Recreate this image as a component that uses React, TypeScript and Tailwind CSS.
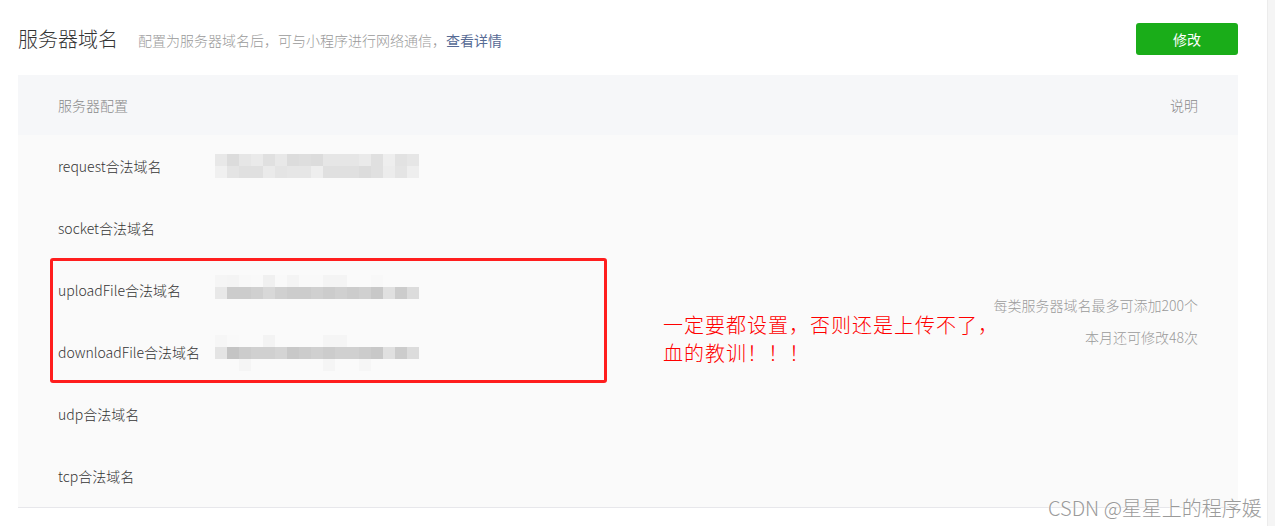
import React from "react";

const FONT = { fontFamily: '"Noto Sans CJK SC", "Noto Sans", sans-serif' };

type Row = string[];

const requestMosaic: Row[] = [
  ["#e8e8e8", "#dcdcdc", "#e6e6e6", "#eaeaea", "#e0e0e0", "#e8e8e8", "#dcdcdc", "#dedede", "#dcdcdc", "#e6e6e6", "#e6e6e6", "#e6e6e6", "#eaeaea", "#e0e0e0", "#eeeeee", "#e2e2e2", "#e6e6e6"],
  ["#f0f0f0", "#e4e4e4", "#e0e0e0", "#e0e0e0", "#eaeaea", "#e4e4e4", "#e6e6e6", "#e6e6e6", "#eeeeee", "#e0e0e0", "#e0e0e0", "#e0e0e0", "#dcdcdc", "#e0e0e0", "#ececec", "#e4e4e4", "#eeeeee"],
];

const uploadMosaic: Row[] = [
  ["#f5f5f5", "#f4f4f4", "#f8f8f8", "#f9f9f9", "#f0f0f0", "#f9f9f9", "#f4f4f4", "#f9f9f9", "#f9f9f9", "#f4f4f4", "#f4f4f4", "#fafafa", "#fafafa", "#f8f8f8", "#fafafa", "#fafafa", "#fafafa"],
  ["#e8e8e8", "#cccccc", "#cccccc", "#d0d0d0", "#d8d8d8", "#d0d0d0", "#cccccc", "#cccccc", "#d0d0d0", "#cccccc", "#d0d0d0", "#cccccc", "#d0d0d0", "#c8c8c8", "#e0e0e0", "#cccccc", "#dcdcdc"],
];

const downloadMosaic: Row[] = [
  ["#f6f6f6", "#f9f9f9", "#fafafa", "#fafafa", "#f3f3f3", "#fafafa", "#fafafa", "#fafafa", "#fafafa", "#f5f5f5", "#f5f5f5", "#fafafa", "#fafafa", "#fafafa", "#fafafa", "#fafafa", "#fafafa"],
  ["#e4e4e4", "#c4c4c4", "#cccccc", "#d0d0d0", "#d0d0d0", "#d4d4d4", "#c8c8c8", "#cccccc", "#d0d0d0", "#cccccc", "#d0d0d0", "#d0d0d0", "#cccccc", "#c8c8c8", "#e0e0e0", "#cccccc", "#dcdcdc"],
  ["#fafafa", "#fafafa", "#f5f5f5", "#fafafa", "#fafafa", "#fafafa", "#fafafa", "#fafafa", "#fafafa", "#f5f5f5", "#fafafa", "#fafafa", "#f6f6f6", "#fafafa", "#fafafa", "#fafafa", "#fafafa"],
];

function Mosaic({ rows, className = "" }: { rows: Row[]; className?: string }) {
  return (
    <div className={"flex flex-col " + className}>
      {rows.map((r, i) => (
        <div key={i} className="flex">
          {r.map((c, j) => (
            <div key={j} className="w-[12px] h-[12px]" style={{ backgroundColor: c }} />
          ))}
        </div>
      ))}
    </div>
  );
}

const rows: { label: string; mosaic?: Row[]; mClass?: string }[] = [
  { label: "request合法域名", mosaic: requestMosaic },
  { label: "socket合法域名" },
  { label: "uploadFile合法域名", mosaic: uploadMosaic, mClass: "mt-[-6px]" },
  { label: "downloadFile合法域名", mosaic: downloadMosaic, mClass: "mt-[2px]" },
  { label: "udp合法域名" },
  { label: "tcp合法域名" },
];

export default function App() {
  return (
    <div className="relative w-[1275px] h-[526px] bg-white overflow-hidden flex font-light" style={FONT}>
      <div className="w-[1267px] pl-[18px] pr-[29px]">
        <div className="pt-[23px] h-[55px] flex items-center justify-between">
          <div className="flex items-center">
            <span className="text-[20px] leading-[32px] text-[#353535]">服务器域名</span>
            <span className="ml-[20px] text-[14px] text-[#9a9a9a] leading-[32px] pt-[2px]">
              配置为服务器域名后，可与小程序进行网络通信，
              <span className="text-[#576b95] font-normal">查看详情</span>
            </span>
          </div>
          <button className="w-[102px] h-[32px] rounded-[3px] bg-[#1aad19] text-white text-[14px] leading-[32px] font-normal">
            修改
          </button>
        </div>

        <div className="mt-[20px]">
          <div className="h-[60px] bg-[#f6f7f9] flex items-center justify-between px-[40px] text-[14px] text-[#8a8a8a]">
            <span>服务器配置</span>
            <span>说明</span>
          </div>
          <div className="flex bg-[#fafafa] border-b border-[#e7e7eb]">
            <div className="flex flex-col">
              {rows.map((r) => (
                <div key={r.label} className="h-[62px] flex items-center pl-[40px]">
                  <span className="w-[157px] text-[14px] text-[#353535] whitespace-nowrap">{r.label}</span>
                  {r.mosaic && <Mosaic rows={r.mosaic} className={r.mClass ?? ""} />}
                </div>
              ))}
            </div>
            <div className="flex-1 flex flex-col justify-center items-end pr-[40px] text-[14px] text-[#9a9a9a] leading-[20px] gap-[12px]">
              <span>每类服务器域名最多可添加200个</span>
              <span>本月还可修改48次</span>
            </div>
          </div>
        </div>
      </div>
      <div className="w-[8px] h-full bg-[#f5f5f5] border-l border-[#ececec]" />

      {/* annotation overlay */}
      <div className="absolute left-[50px] top-[258px] w-[557px] h-[125px] border-[3px] border-[#ff1e1e] rounded-[3px]" />
      <div className="absolute left-[663px] top-[311px] text-[20px] leading-[28px] tracking-[1px] text-[#ff0000]">
        <div>一定要都设置，否则还是上传不了，</div>
        <div>血的教训！！！</div>
      </div>

      {/* watermark */}
      <div
        className="absolute left-[1048px] top-[494px] text-[20px] leading-[28px] text-[#9a9a9a] whitespace-nowrap"
        style={{ textShadow: "0 0 2px #ffffff, 0 0 1px #ffffff" }}
      >
        CSDN @星星上的程序媛
      </div>
    </div>
  );
}
